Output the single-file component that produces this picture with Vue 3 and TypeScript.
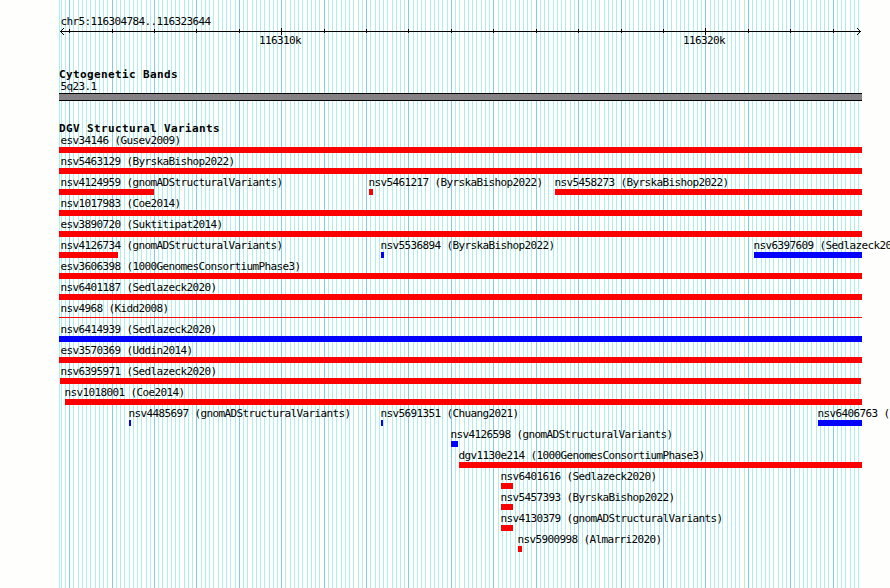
<template>
  <div class="browser">
    <svg class="grid" width="890" height="588" shape-rendering="crispEdges">
      <rect class="minor" x="59" y="0" width="1" height="588" />
      <rect
        v-for="line in gridLines"
        :key="line.x"
        :class="line.major ? 'major' : 'minor'"
        :x="line.x"
        y="0"
        width="1"
        height="588"
      />
    </svg>

    <main class="panel">
      <section class="ruler">
        <div class="text region">chr5:116304784..116323644</div>
        <svg class="axis" width="890" height="7" shape-rendering="crispEdges">
          <rect x="60" y="3" width="801" height="1" />
          <rect
            v-for="tick in ticks"
            :key="tick.x"
            :x="tick.x"
            :y="tick.labelled ? 0 : 1"
            width="1"
            :height="tick.labelled ? 7 : 4"
          />
          <path
            d="M61 2h1v1h-1zM62 1h1v1h-1zM63 0h1v1h-1zM61 4h1v1h-1zM62 5h1v1h-1zM63 6h1v1h-1z"
          />
          <path
            d="M859 2h1v1h-1zM858 1h1v1h-1zM857 0h1v1h-1zM859 4h1v1h-1zM858 5h1v1h-1zM857 6h1v1h-1z"
          />
        </svg>
        <div class="scale">
          <span
            v-for="tick in labelledTicks"
            :key="tick.x"
            class="text cell"
            :style="{ marginLeft: tick.x - 22 + 'px' }"
          >{{ tick.label }}</span>
        </div>
      </section>

      <section class="bands">
        <h2>Cytogenetic Bands</h2>
        <div class="text band-name">5q23.1</div>
        <div class="band"></div>
      </section>

      <section class="variants">
        <h2>DGV Structural Variants</h2>
        <div v-for="(row, i) in rows" :key="i" class="row">
          <div
            v-for="v in row"
            :key="v.name"
            class="cell"
            :style="{ marginLeft: v.start + 'px' }"
          >
            <div
              class="text name"
              :style="{ marginLeft: Math.max(v.start, 61) - v.start - 0.5 + 'px' }"
            >{{ v.name }}</div>
            <div
              class="bar"
              :class="[v.type, { thin: v.thin }]"
              :style="{ width: v.end - v.start + 'px' }"
            ></div>
          </div>
        </div>
      </section>
    </main>
  </div>
</template>

<script setup lang="ts">
interface Variant {
  name: string;
  start: number;
  end: number;
  type: "loss" | "gain";
  thin?: boolean;
}

const REGION_START = 116304784;
const REGION_END = 116323644;
const LEFT = 59;
const RIGHT = 862;

const toX = (pos: number) =>
  Math.round(60 + ((pos - REGION_START) * 800) / (REGION_END - REGION_START + 1));

// one line per 100 bp, darker every 1 kb
const gridLines: { x: number; major: boolean }[] = [];
for (let pos = 116304800; pos <= REGION_END; pos += 100) {
  gridLines.push({ x: toX(pos), major: pos % 1000 === 0 });
}

const ticks: { x: number; labelled: boolean; label: string }[] = [];
for (let pos = 116305000; pos <= REGION_END; pos += 1000) {
  ticks.push({ x: toX(pos), labelled: pos % 10000 === 0, label: pos / 1000 + "k" });
}
const labelledTicks = ticks.filter((t) => t.labelled);

const loss = (name: string, start = LEFT, end = RIGHT): Variant => ({
  name,
  start,
  end,
  type: "loss",
});

const gain = (name: string, start = LEFT, end = RIGHT): Variant => ({
  name,
  start,
  end,
  type: "gain",
});

const rows: Variant[][] = [
  [loss("esv34146 (Gusev2009)")],
  [loss("nsv5463129 (ByrskaBishop2022)")],
  [
    loss("nsv4124959 (gnomADStructuralVariants)", LEFT, 154),
    loss("nsv5461217 (ByrskaBishop2022)", 369, 373),
    loss("nsv5458273 (ByrskaBishop2022)", 555),
  ],
  [loss("nsv1017983 (Coe2014)")],
  [loss("esv3890720 (Suktitipat2014)")],
  [
    loss("nsv4126734 (gnomADStructuralVariants)", LEFT, 118),
    gain("nsv5536894 (ByrskaBishop2022)", 381, 384),
    gain("nsv6397609 (Sedlazeck2020)", 754),
  ],
  [loss("esv3606398 (1000GenomesConsortiumPhase3)")],
  [loss("nsv6401187 (Sedlazeck2020)")],
  [{ ...loss("nsv4968 (Kidd2008)"), thin: true }],
  [gain("nsv6414939 (Sedlazeck2020)")],
  [loss("esv3570369 (Uddin2014)")],
  [loss("nsv6395971 (Sedlazeck2020)", 60, 861)],
  [loss("nsv1018001 (Coe2014)", 65)],
  [
    gain("nsv4485697 (gnomADStructuralVariants)", 129, 131),
    gain("nsv5691351 (Chuang2021)", 381, 383),
    gain("nsv6406763 (Sedlazeck2020)", 818),
  ],
  [gain("nsv4126598 (gnomADStructuralVariants)", 451, 458)],
  [loss("dgv1130e214 (1000GenomesConsortiumPhase3)", 459)],
  [loss("nsv6401616 (Sedlazeck2020)", 501, 513)],
  [loss("nsv5457393 (ByrskaBishop2022)", 501, 513)],
  [loss("nsv4130379 (gnomADStructuralVariants)", 501, 513)],
  [loss("nsv5900998 (Almarri2020)", 518, 522)],
];
</script>

<style>
body {
  margin: 0;
  background: #fefffc;
}
</style>

<style scoped>
.browser {
  display: grid;
  width: 890px;
  height: 588px;
  overflow: hidden;
  color: #000;
  font-family: "DejaVu Sans Mono", "Liberation Mono", monospace;
}

/* grid lines and tracks share one cell so the tracks lie over the lines */
.grid,
.panel {
  grid-area: 1 / 1;
  min-width: 0;
}

.grid {
  display: block;
}

.minor {
  fill: #afeeee;
}

.major {
  fill: #82caf0;
}

.panel {
  width: 890px;
  padding-top: 16px;
  box-sizing: border-box;
}

.text {
  height: 12px;
  font-size: 11px;
  line-height: 12px;
  letter-spacing: -0.622px;
  white-space: pre;
}

.region,
.band-name {
  margin-left: 60.5px;
}

.axis {
  display: block;
}

.scale,
.row {
  display: grid;
  grid-template-columns: 890px;
}

.cell {
  grid-area: 1 / 1;
  justify-self: start;
}

.scale {
  height: 12px;
}

.bands {
  margin-top: 22px;
}

h2 {
  height: 12px;
  margin: 0 0 0 59px;
  font-size: 11px;
  font-weight: bold;
  line-height: 12px;
  letter-spacing: 0.378px;
  white-space: pre;
}

.band {
  width: 803px;
  height: 8px;
  margin-left: 59px;
  box-sizing: border-box;
  border: solid #000;
  border-width: 1px 0;
  background: #848284;
}

.variants {
  margin-top: 22px;
}

.row {
  height: 21px;
}

.name {
  width: 0;
}

.bar {
  height: 6px;
}

.bar.thin {
  height: 1px;
  margin-top: 2px;
}

.loss {
  background: #f00;
}

.gain {
  background: #00f;
}
</style>
